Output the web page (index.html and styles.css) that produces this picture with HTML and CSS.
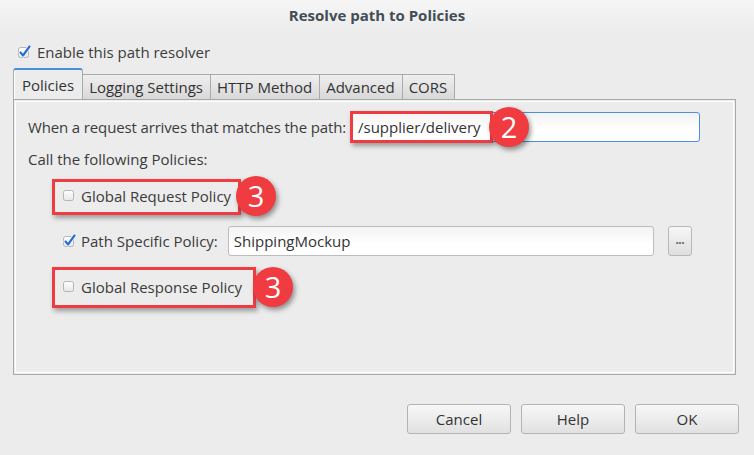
FILE: index.html
```html
<!DOCTYPE html>
<html>
<head>
<meta charset="utf-8">
<link rel="stylesheet" href="styles.css">
</head>
<body>
<div class="dialog">
  <div class="title">Resolve path to Policies</div>
  <div class="enable-row">
    <svg class="cb" width="14" height="14" viewBox="0 0 14 14"><defs><linearGradient id="g1" x1="0" y1="0" x2="0" y2="1"><stop offset="0" stop-color="#ffffff"/><stop offset="1" stop-color="#e6e6e6"/></linearGradient></defs><rect x="1.5" y="2.5" width="10" height="10" rx="2" fill="url(#g1)" stroke="#b5b5b5"/><path d="M3.5 7.5 L6 10.5 L12.5 1.5" fill="none" stroke="#ffffff" stroke-width="3.8" stroke-linecap="round" stroke-linejoin="round"/><path d="M3.5 7.5 L6 10.5 L12.5 1.5" fill="none" stroke="#2b6fd3" stroke-width="2.2" stroke-linecap="round" stroke-linejoin="round"/></svg>
    <span class="label">Enable this path resolver</span>
  </div>
  <div class="tabs">
    <div class="tab active">Policies</div>
    <div class="tab">Logging Settings</div>
    <div class="tab">HTTP Method</div>
    <div class="tab">Advanced</div>
    <div class="tab">CORS</div>
  </div>
  <div class="panel">
    <div class="row row-path">
      <span class="label tight">When a request arrives that matches the path:</span>
      <div class="field focused">/supplier/delivery</div>
    </div>
    <div class="row row-call"><span class="label">Call the following Policies:</span></div>
    <div class="row row-check row-req">
      <svg class="cb" width="14" height="14" viewBox="0 0 14 14"><defs><linearGradient id="g2" x1="0" y1="0" x2="0" y2="1"><stop offset="0" stop-color="#ffffff"/><stop offset="1" stop-color="#e6e6e6"/></linearGradient></defs><rect x="1.5" y="1.5" width="10" height="10" rx="2" fill="url(#g2)" stroke="#b5b5b5"/></svg>
      <span class="label">Global Request Policy</span>
    </div>
    <div class="row row-check row-specific">
      <svg class="cb" width="14" height="14" viewBox="0 0 14 14"><defs><linearGradient id="g3" x1="0" y1="0" x2="0" y2="1"><stop offset="0" stop-color="#ffffff"/><stop offset="1" stop-color="#e6e6e6"/></linearGradient></defs><rect x="1.5" y="2.5" width="10" height="10" rx="2" fill="url(#g3)" stroke="#b5b5b5"/><path d="M3.5 7.5 L6 10.5 L12.5 1.5" fill="none" stroke="#ffffff" stroke-width="3.8" stroke-linecap="round" stroke-linejoin="round"/><path d="M3.5 7.5 L6 10.5 L12.5 1.5" fill="none" stroke="#2b6fd3" stroke-width="2.2" stroke-linecap="round" stroke-linejoin="round"/></svg>
      <span class="label">Path Specific Policy:</span>
      <div class="field plain">ShippingMockup</div>
      <div class="dots">...</div>
    </div>
    <div class="row row-check row-resp">
      <svg class="cb" width="14" height="14" viewBox="0 0 14 14"><defs><linearGradient id="g4" x1="0" y1="0" x2="0" y2="1"><stop offset="0" stop-color="#ffffff"/><stop offset="1" stop-color="#e6e6e6"/></linearGradient></defs><rect x="1.5" y="1.5" width="10" height="10" rx="2" fill="url(#g4)" stroke="#b5b5b5"/></svg>
      <span class="label">Global Response Policy</span>
    </div>

    <div class="hl hl-path"></div>
    <div class="badge badge-2">2</div>
    <div class="hl hl-req"></div>
    <div class="badge badge-3a">3</div>
    <div class="hl hl-resp"></div>
    <div class="badge badge-3b">3</div>
  </div>
  <div class="buttons">
    <div class="btn">Cancel</div>
    <div class="btn">Help</div>
    <div class="btn">OK</div>
  </div>
</div>
</body>
</html>
```

FILE: styles.css
```css
html, body {
  margin: 0;
  padding: 0;
  background: #ececec;
}
.dialog {
  width: 754px;
  height: 455px;
  background: #ececec;
  font-family: "Open Sans", "DejaVu Sans", sans-serif;
  font-size: 15px;
  color: #3b3b3b;
  display: flex;
  flex-direction: column;
}
.title {
  height: 31px;
  line-height: 30px;
  text-align: center;
  font-weight: bold;
  font-size: 15px;
  color: #434d55;
  background: linear-gradient(#f6f6f6, #ececec);
}
.enable-row {
  display: flex;
  align-items: center;
  height: 20px;
  margin-top: 11px;
  padding-left: 17px;
}
.cb {
  display: block;
  flex: none;
}
.enable-row .label {
  margin-left: 6px;
}
.label {
  line-height: 20px;
  white-space: nowrap;
}
.label.tight {
  letter-spacing: -0.14px;
}
.tabs {
  display: flex;
  align-items: flex-end;
  margin-top: 7px;
  padding-left: 13px;
  height: 30px;
}
.tab {
  height: 24px;
  line-height: 24px;
  padding: 0 7px 0 6px;
  border: 1px solid #aaaaaa;
  border-bottom: none;
  border-left: none;
  background: linear-gradient(#efefef, #d8d8d8);
  color: #333;
  white-space: nowrap;
}
.tab.active {
  height: 29px;
  line-height: 31px;
  padding: 0 8px;
  border-left: 1px solid #aaaaaa;
  border-top: 2px solid #4a8fdc;
  border-radius: 3px 3px 0 0;
  background: #ececec;
  box-shadow: inset 1px 0 0 #fff;
}
.panel {
  position: relative;
  margin-left: 13px;
  width: 707px;
  height: 274px;
  border: 1px solid #a9a9a9;
  box-shadow: inset 0 0 0 1px #ececec, inset 0 0 0 2px #ffffff;
  padding: 0 0 0 14px;
  box-sizing: content-box;
  display: flex;
  flex-direction: column;
}
.row {
  display: flex;
  align-items: center;
}
.row-path {
  margin-top: 12px;
  height: 30px;
}
.field {
  height: 28px;
  line-height: 28px;
  box-sizing: content-box;
  border-radius: 3px;
  background: linear-gradient(#f3f3f3, #ffffff 60%);
  padding-left: 5px;
  color: #333;
  white-space: nowrap;
}
.field.focused {
  margin-left: 6px;
  width: 341px;
  border: 1px solid #4a90e2;
}
.row-call {
  margin-top: 7px;
  height: 20px;
}
.row-check {
  padding-left: 34px;
}
.row-check .label {
  margin-left: 5px;
}
.row-req {
  margin-top: 17px;
  height: 20px;
}
.row-specific {
  margin-top: 20px;
  height: 30px;
}
.field.plain {
  margin-left: 10px;
  width: 419px;
  border: 1px solid #bdbdbd;
}
.dots {
  margin-left: 14px;
  width: 22px;
  height: 28px;
  border: 1px solid #b8b8b8;
  border-radius: 3px;
  background: linear-gradient(#f7f7f7, #dedede);
  text-align: center;
  line-height: 26px;
  font-size: 12px;
  font-weight: bold;
  color: #666;
  letter-spacing: -0.5px;
}
.row-resp {
  margin-top: 21px;
  height: 20px;
}
.hl {
  position: absolute;
  border: 3px solid #ee3c42;
  box-sizing: border-box;
  box-shadow: 2px 3px 5px rgba(0,0,0,0.35);
}
.hl-path { left: 336px; top: 11px; width: 143px; height: 32px; }
.hl-req { left: 38px; top: 79px; width: 189px; height: 36px; }
.hl-resp { left: 38px; top: 167px; width: 204px; height: 41px; }
.badge {
  position: absolute;
  width: 40px;
  height: 40px;
  border-radius: 50%;
  background: #f03b41;
  color: #fff;
  font-family: "Open Sans", "DejaVu Sans", sans-serif;
  font-size: 29px;
  line-height: 40px;
  text-align: center;
  box-shadow: 2px 3px 5px rgba(0,0,0,0.4);
}
.badge-2 { left: 475px; top: 7px; }
.badge-3a { left: 222px; top: 76px; }
.badge-3b { left: 239px; top: 167px; }
.buttons {
  display: flex;
  justify-content: flex-end;
  gap: 10px;
  margin-top: 29px;
  padding-right: 15px;
}
.btn {
  width: 102px;
  height: 28px;
  line-height: 28px;
  border: 1px solid #b3b3b3;
  border-radius: 3px;
  background: linear-gradient(#f7f7f7, #e1e1e1);
  text-align: center;
  color: #333;
}
```
